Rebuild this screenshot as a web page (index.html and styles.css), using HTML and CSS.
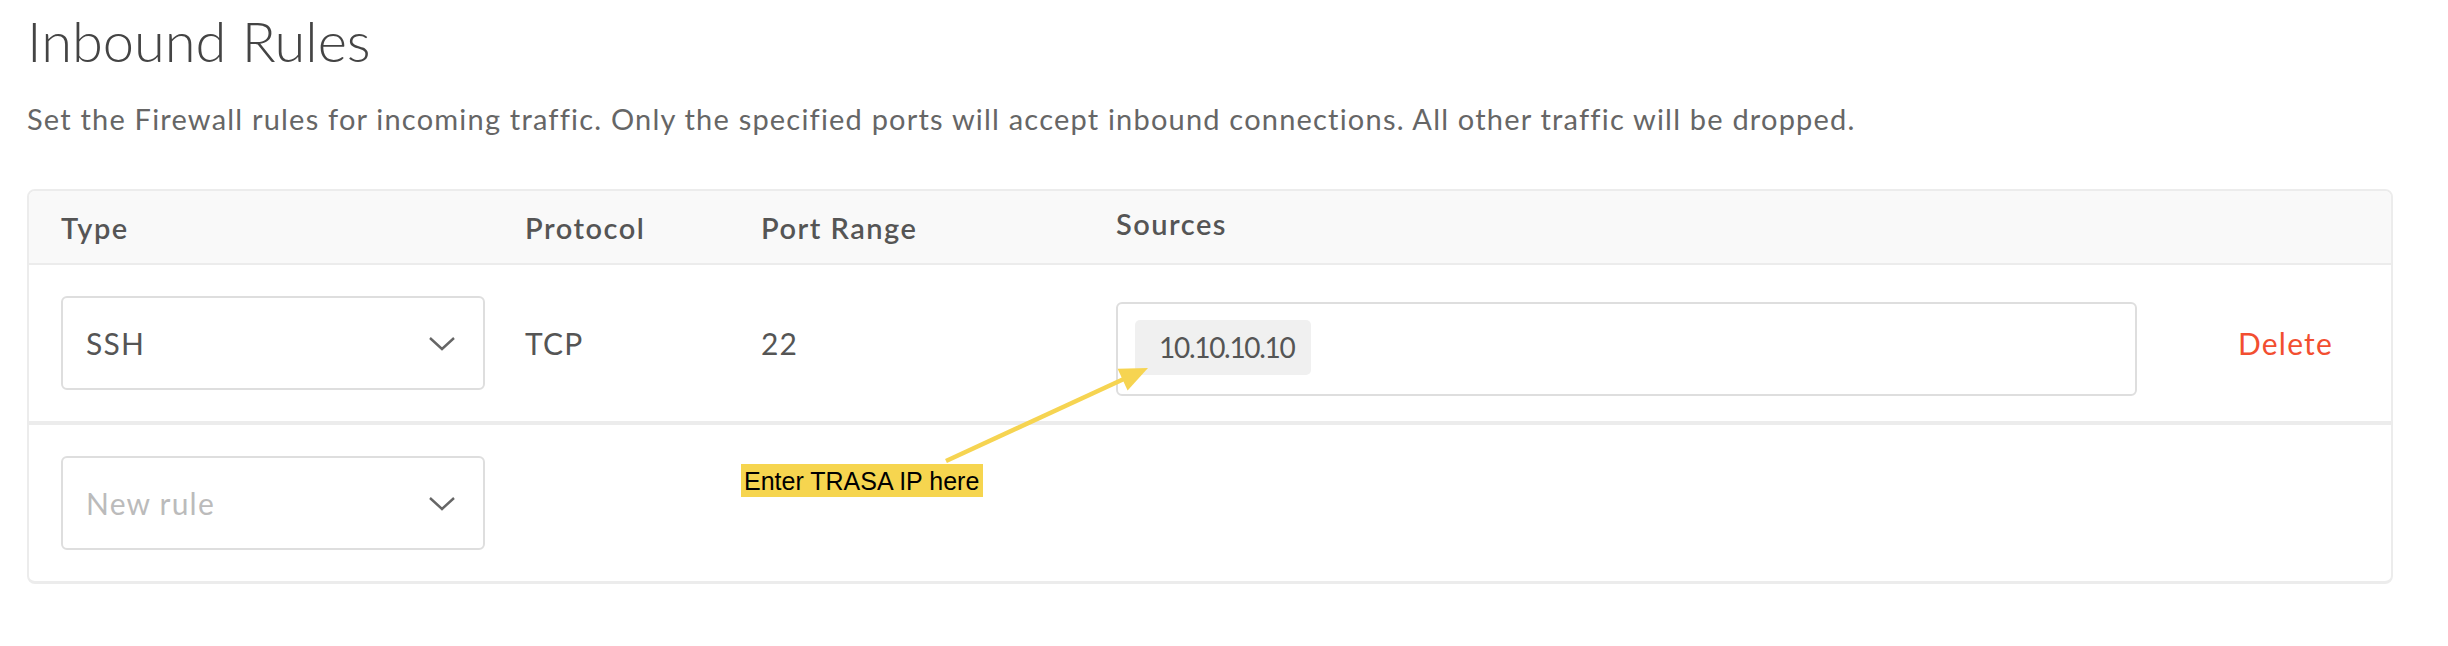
FILE: index.html
```html
<!DOCTYPE html>
<html>
<head>
<meta charset="utf-8">
<link rel="stylesheet" href="styles.css">
</head>
<body>
<div class="page">
  <h1 class="title">Inbound Rules</h1>
  <p class="desc">Set the Firewall rules for incoming traffic. Only the specified ports will accept inbound connections. All other traffic will be dropped.</p>
  <div class="card">
    <div class="row head">
      <div class="cell">Type</div>
      <div class="cell">Protocol</div>
      <div class="cell">Port Range</div>
      <div class="cell sources-h">Sources</div>
      <div class="cell"></div>
    </div>
    <div class="row body">
      <div class="cell">
        <div class="select">
          <span>SSH</span>
          <svg class="chev" width="28" height="16" viewBox="0 0 28 16"><path d="M2 2 L14 13 L26 2" fill="none" stroke="#666" stroke-width="2.4"/></svg>
        </div>
      </div>
      <div class="cell">TCP</div>
      <div class="cell">22</div>
      <div class="cell">
        <div class="tags"><span class="chip">10.10.10.10</span></div>
      </div>
      <div class="cell"><span class="delete">Delete</span></div>
    </div>
    <div class="row body last">
      <div class="cell">
        <div class="select placeholder">
          <span>New rule</span>
          <svg class="chev" width="28" height="16" viewBox="0 0 28 16"><path d="M2 2 L14 13 L26 2" fill="none" stroke="#666" stroke-width="2.4"/></svg>
        </div>
      </div>
      <div class="cell"></div>
      <div class="cell"></div>
      <div class="cell"></div>
      <div class="cell"></div>
    </div>
  </div>
  <svg class="arrow" width="2448" height="646" viewBox="0 0 2448 646">
    <line x1="946" y1="461" x2="1126" y2="378" stroke="#f6d451" stroke-width="4.5"/>
    <polygon points="1148,368 1117.6,368.8 1127.6,390.6" fill="#f6d451"/>
  </svg>
  <div class="note">Enter TRASA IP here</div>
</div>
</body>
</html>
```
FILE: styles.css
```css
html, body {
  margin: 0;
  padding: 0;
  background: #fff;
}
.page {
  position: relative;
  width: 2448px;
  height: 646px;
  padding: 0 0 0 27px;
  box-sizing: border-box;
  font-family: "Lato", "Open Sans", sans-serif;
  color: #555;
}
.title {
  margin: 0;
  padding-top: 7px;
  font-size: 56px;
  line-height: 68px;
  font-weight: 300;
  color: #444;
}
.desc {
  margin: 26px 0 0 0;
  font-size: 29px;
  line-height: 36px;
  letter-spacing: 1.2px;
  color: #666;
}
.card {
  margin-top: 52px;
  width: 2366px;
  box-sizing: border-box;
  border: 2px solid #ececec;
  border-bottom-width: 3px;
  border-radius: 8px;
  overflow: hidden;
}
.row {
  display: grid;
  grid-template-columns: 464px 236px 355px 1021px 1fr;
  padding-left: 32px;
  align-items: center;
}
.head {
  height: 72px;
  background: #f9f9f9;
  border-bottom: 2px solid #ececec;
  font-size: 29px;
  letter-spacing: 1.5px;
  font-weight: 600;
  color: #555;
}
.sources-h {
  margin-top: -8px;
}
.body {
  height: 156px;
  font-size: 30px;
  letter-spacing: 1.2px;
  color: #555;
  border-bottom: 4px solid #ececec;
}
.body.last {
  border-bottom: 0;
}
.select {
  width: 424px;
  height: 94px;
  box-sizing: border-box;
  border: 2px solid #dedede;
  border-radius: 6px;
  display: flex;
  align-items: center;
  justify-content: space-between;
  padding: 0 27px 0 23px;
}
.select.placeholder {
  color: #bbb;
}
.chev {
  display: block;
  margin-top: 2px;
}
.tags {
  width: 1021px;
  height: 94px;
  box-sizing: border-box;
  border: 2px solid #dedede;
  border-radius: 6px;
  margin-top: 12px;
  padding: 16px 0 0 17px;
}
.chip {
  display: inline-block;
  height: 55px;
  line-height: 55px;
  padding: 0 17px 0 24px;
  background: #f0f0f0;
  border-radius: 5px;
  color: #555;
  font-size: 28px;
  letter-spacing: -1.3px;
}
.delete {
  color: #f24e30;
  margin-left: 101px;
}
.arrow {
  position: absolute;
  left: 0;
  top: 0;
  pointer-events: none;
}
.note {
  position: absolute;
  left: 741px;
  top: 464px;
  height: 33px;
  line-height: 34px;
  padding: 0 4px 0 3px;
  background: #f6d54f;
  color: #000;
  font-family: "Liberation Sans", Arial, sans-serif;
  font-size: 25px;
}
```
